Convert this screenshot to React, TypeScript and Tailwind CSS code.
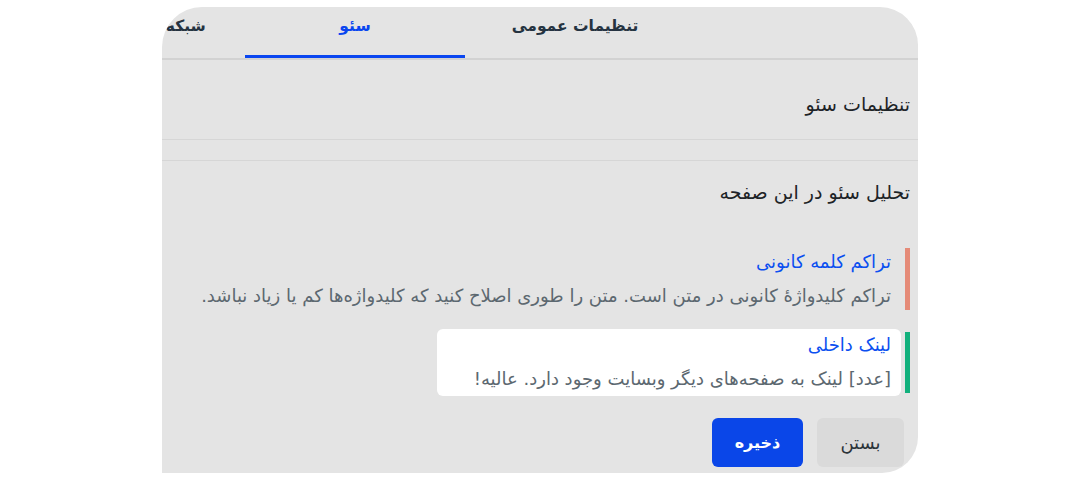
import React from 'react';

const FONT = '"DejaVu Sans", "Noto Sans Arabic", sans-serif';

const tabs = [
  { label: 'تنظیمات عمومی', active: false },
  { label: 'سئو', active: true },
  { label: 'شبکه‌های اجتماعی', active: false },
];

const AnalysisItem = ({
  title,
  text,
  bar,
  highlight,
}: {
  title: string;
  text: string;
  bar: string;
  highlight?: boolean;
}) => (
  <div className="flex items-stretch">
    <div className={`w-[5px] shrink-0 ${bar} ${highlight ? 'my-[3px]' : ''}`} />
    <div className={`mr-[4px] rounded-md pr-[10px] ${highlight ? 'bg-white pt-[2px] pb-[3px] pl-[37px]' : 'pl-[8px]'}`}>
      <div className="mb-[6px] text-[18px] leading-[28px] text-[#0b4ff0]">{title}</div>
      <div className="text-[18px] leading-[28px] text-[#5c6870]">{text}</div>
    </div>
  </div>
);

export default function App() {
  return (
    <div className="w-full h-[480px] bg-white pt-[7px]" style={{ fontFamily: FONT }}>
      <div
        dir="rtl"
        className="ml-[162px] w-[756px] h-[466px] bg-[#e4e4e4] overflow-hidden rounded-tl-[40px] rounded-tr-[38px] rounded-br-[36px]"
      >
        {/* tabs */}
        <div className="flex h-[53px] border-b-2 border-[#d2d2d2] pr-[233px]">
          {tabs.map((t) => (
            <div
              key={t.label}
              className={`relative w-[220px] shrink-0 text-center text-[15.5px] font-bold pt-[8px] whitespace-nowrap ${
                t.active ? 'text-[#0a46f0]' : 'text-[#253341]'
              }`}
            >
              {t.label}
              {t.active && <div className="absolute bottom-[0px] left-0 right-0 h-[3px] bg-[#0a46f0]" />}
            </div>
          ))}
        </div>

        {/* section header */}
        <div className="h-[80px] border-b border-[#d6d6d6] pr-[8px] pt-[30px] text-[19px] leading-[28px] text-[#1d2327]">
          تنظیمات سئو
        </div>
        <div className="h-[21px] border-b border-[#d6d6d6]" />

        {/* analysis */}
        <div className="pr-[8px] pt-[17px] text-[19px] leading-[28px] text-[#1d2327]">تحلیل سئو در این صفحه</div>

        <div className="mt-[42px] flex flex-col items-start gap-[19px] pr-[8px]">
          <AnalysisItem
            bar="bg-[#e58b78]"
            title="تراکم کلمه کانونی"
            text="تراکم کلیدواژهٔ کانونی در متن است. متن را طوری اصلاح کنید که کلیدواژه‌ها کم یا زیاد نباشد."
          />
          <AnalysisItem
            bar="bg-[#12b07c]"
            highlight
            title="لینک داخلی"
            text="[عدد] لینک به صفحه‌های دیگر وبسایت وجود دارد. عالیه!"
          />
        </div>

        {/* actions */}
        <div className="mt-[22px] flex gap-[14px] pr-[14px]">
          <button className="h-[49px] w-[87px] rounded-md bg-[#dadada] text-[18px] text-[#2b3339]">بستن</button>
          <button className="h-[49px] w-[91px] rounded-md bg-[#0a46e8] text-[16px] font-bold text-white">ذخیره</button>
        </div>
      </div>
    </div>
  );
}
